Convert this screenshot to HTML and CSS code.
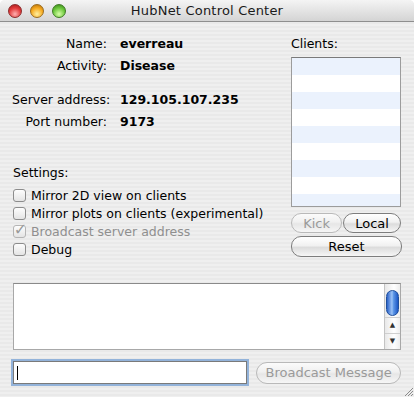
FILE: index.html
```html
<!DOCTYPE html>
<html lang="en">
<head>
  <meta charset="UTF-8">
  <title>HubNet Control Center</title>
  <link rel="stylesheet" href="styles.css">
</head>
<body>
  <div class="window">
    <div class="titlebar">
      <div class="lights">
        <span class="light red"></span>
        <span class="light yellow"></span>
        <span class="light green"></span>
      </div>
      <p class="title">HubNet Control Center</p>
    </div>

    <div class="content">
      <div class="top">
        <div class="left">
          <div class="info">
            <span class="label">Name:</span><span class="value">everreau</span>
            <span class="label">Activity:</span><span class="value">Disease</span>
          </div>
          <div class="info second">
            <span class="label">Server address:</span><span class="value">129.105.107.235</span>
            <span class="label">Port number:</span><span class="value">9173</span>
          </div>

          <div class="settings">
            <p class="settings-title">Settings:</p>
            <label class="check"><span class="box"></span>Mirror 2D view on clients</label>
            <label class="check"><span class="box"></span>Mirror plots on clients (experimental)</label>
            <label class="check disabled"><span class="box checked">✓</span>Broadcast server address</label>
            <label class="check"><span class="box"></span>Debug</label>
          </div>
        </div>

        <div class="right">
          <p class="clients-title">Clients:</p>
          <div class="clients-list">
            <div class="row"></div><div class="row"></div><div class="row"></div>
            <div class="row"></div><div class="row"></div><div class="row"></div>
            <div class="row"></div><div class="row"></div><div class="row"></div>
          </div>
          <div class="button-row">
            <button class="btn kick" disabled>Kick</button>
            <button class="btn local">Local</button>
          </div>
          <button class="btn reset">Reset</button>
        </div>
      </div>

      <div class="messages">
        <div class="message-text"></div>
        <div class="scrollbar">
          <div class="thumb"></div>
          <div class="arrow up">▲</div>
          <div class="arrow down">▼</div>
        </div>
      </div>

      <div class="bottom">
        <div class="input"><span class="caret"></span></div>
        <button class="btn broadcast" disabled>Broadcast Message</button>
      </div>
    </div>

    <svg class="grip" width="12" height="12" viewBox="0 0 12 12">
      <path d="M11 3 L3 11 M11 6 L6 11 M11 9 L9 11" stroke="#8a8a8a" stroke-width="1"/>
    </svg>
  </div>
</body>
</html>
```

FILE: styles.css
```css
body {
  margin: 0;
  font-family: "DejaVu Sans", sans-serif;
  font-size: 12.5px;
  color: #000;
  background-color: #ffffff;
}
p {
  margin: 0;
}
.window {
  position: relative;
  width: 414px;
  height: 397px;
  overflow: hidden;
  border-radius: 5px 5px 0 0;
  background: repeating-linear-gradient(#efefef 0 2px, #e9e9e9 2px 4px);
}
.titlebar {
  position: relative;
  height: 21px;
  border-bottom: 1px solid #8e8e8e;
  background: linear-gradient(#f4f4f4, #d4d4d4);
  display: flex;
  align-items: center;
  justify-content: center;
}
.lights {
  position: absolute;
  left: 8px;
  top: 4px;
  display: flex;
  gap: 8px;
}
.light {
  width: 14px;
  height: 14px;
  border-radius: 50%;
  box-sizing: border-box;
}
.red {
  background: radial-gradient(circle at 50% 75%, #ffb0b0, #e23a3a 55%, #a01818);
  border: 1px solid #8a2a2a;
}
.yellow {
  background: radial-gradient(circle at 50% 75%, #fff0a0, #f6aa20 55%, #b06a08);
  border: 1px solid #9a6b1c;
}
.green {
  background: radial-gradient(circle at 50% 75%, #d8ffa8, #6cc83c 55%, #357e16);
  border: 1px solid #3d7a23;
}
.title {
  font-size: 13px;
  color: #1a1a1a;
  letter-spacing: 0.2px;
}
.content {
  padding: 10px 13px 0 13px;
}
.top {
  display: flex;
  height: 227px;
}
.left {
  width: 278px;
}
.info {
  display: grid;
  grid-template-columns: 95px auto;
  column-gap: 13px;
  grid-auto-rows: 22px;
  align-items: center;
  margin-left: -1px;
}
.info.second {
  margin-top: 12px;
}
.label {
  text-align: right;
  white-space: nowrap;
}
.value {
  font-weight: bold;
}
.settings {
  margin-top: 32px;
}
.settings-title {
  height: 18px;
  line-height: 18px;
  margin-bottom: 4px;
}
.check {
  display: flex;
  align-items: center;
  gap: 5px;
  height: 18px;
  white-space: nowrap;
}
.box {
  width: 13px;
  height: 13px;
  box-sizing: border-box;
  border: 1px solid #8c8c8c;
  border-radius: 3px;
  background: linear-gradient(#fdfdfd, #e4e4e4);
  display: flex;
  align-items: center;
  justify-content: center;
  line-height: 1;
  color: #9a9a9a;
}
.box.checked {
  font-size: 16px;
  padding-bottom: 3px;
  padding-left: 2px;
}
.disabled {
  color: #8f8f8f;
}
.disabled .box {
  border-color: #b4b4b4;
}
.right {
  width: 110px;
  margin-top: 1px;
}
.clients-title {
  height: 22px;
  line-height: 22px;
}
.clients-list {
  margin-top: 2px;
  height: 150px;
  box-sizing: border-box;
  border: 1px solid #9c9c9c;
  border-top-color: #7a7a7a;
  overflow: hidden;
  background: #fff;
}
.row {
  height: 17px;
}
.row:nth-child(odd) {
  background: #ebf2fd;
}
.btn {
  font-family: "DejaVu Sans", sans-serif;
  font-size: 13px;
  color: #000;
  height: 20px;
  padding: 0;
  border: 1px solid #7d7d7d;
  border-radius: 10px;
  background: linear-gradient(#ffffff, #f1f1f1 45%, #dcdcdc 55%, #f6f6f6);
}
.btn:disabled {
  color: #9a9a9a;
  border-color: #b9b9b9;
  background: linear-gradient(#fbfbfb, #f0f0f0 45%, #e6e6e6 55%, #f6f6f6);
}
.button-row {
  display: flex;
  margin-top: 6px;
  gap: 1px;
}
.kick {
  width: 52px;
}
.local {
  width: 59px;
}
.reset {
  width: 111px;
  height: 21px;
  margin-top: 3px;
}
.messages {
  margin-top: 24px;
  height: 67px;
  width: 388px;
  box-sizing: border-box;
  border: 1px solid #a8a8a8;
  border-top-color: #8a8a8a;
  background: #fff;
  display: flex;
}
.message-text {
  flex: 1;
}
.scrollbar {
  width: 15px;
  border-left: 1px solid #c4c4c4;
  background: linear-gradient(90deg, #e8e8e8, #ffffff 60%, #eeeeee);
  display: flex;
  flex-direction: column;
}
.thumb {
  margin: 6px 1px 0 1px;
  height: 28px;
  border-radius: 7px;
  box-sizing: border-box;
  border: 1px solid #1f4f9c;
  background: linear-gradient(90deg, #2b62c7, #9cc3f7 45%, #5b95e6 60%, #1d57c4);
}
.arrow {
  height: 15px;
  font-size: 7px;
  line-height: 15px;
  text-align: center;
  color: #333;
  border-top: 1px solid #cfcfcf;
}
.arrow.up {
  margin-top: 1px;
}
.bottom {
  display: flex;
  align-items: center;
  margin-top: 11px;
  gap: 9px;
}
.input {
  width: 235px;
  height: 23px;
  box-sizing: border-box;
  border: 1px solid #7a7a7a;
  background: #fff;
  box-shadow: 0 0 0 2px #93b3da;
  display: flex;
  align-items: center;
  padding-left: 3px;
}
.caret {
  width: 1px;
  height: 14px;
  background: #000;
}
.broadcast {
  width: 145px;
  height: 22px;
  border-radius: 11px;
}
.grip {
  position: absolute;
  right: 0;
  bottom: 0;
}
```
